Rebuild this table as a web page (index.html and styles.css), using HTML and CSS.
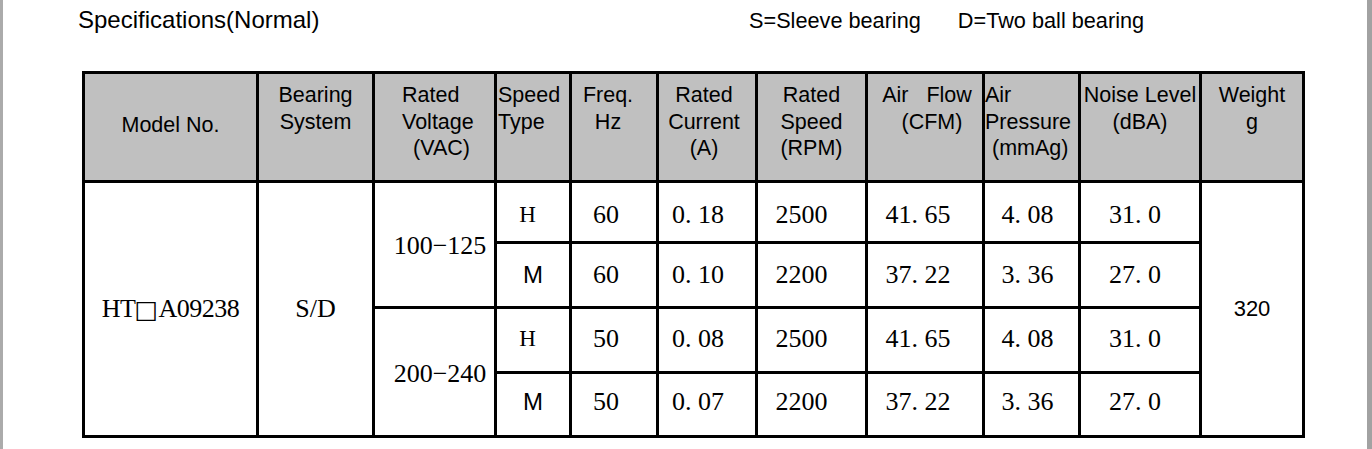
FILE: index.html
```html
<!DOCTYPE html>
<html lang="en">
<head>
<meta charset="utf-8">
<title>Specifications(Normal)</title>
<link rel="stylesheet" href="styles.css">
</head>
<body>
<div class="page">
  <div class="top-row">
    <div class="title">Specifications(Normal)</div>
    <div class="legend">
      <span>S=Sleeve bearing</span>
      <span>D=Two ball bearing</span>
    </div>
  </div>

  <div class="spec-grid">
    <div class="cell head head-mid">Model No.</div>
    <div class="cell head">Bearing<br>System</div>
    <div class="cell head head-left head-volt">Rated<br>Voltage<br><span class="volt-unit">(VAC)</span></div>
    <div class="cell head head-left head-type">Speed<br>Type</div>
    <div class="cell head head-freq">Freq.<br>Hz</div>
    <div class="cell head head-cur">Rated<br>Current<br>(A)</div>
    <div class="cell head">Rated<br>Speed<br>(RPM)</div>
    <div class="cell head head-flow"><span class="flow-top">Air Flow</span><br><span class="flow-unit">(CFM)</span></div>
    <div class="cell head head-left">Air<br>Pressure<br><span class="press-unit">(mmAg)</span></div>
    <div class="cell head">Noise Level<br>(dBA)</div>
    <div class="cell head">Weight<br>g</div>

    <div class="cell body serif span4 model">HT<span class="box">□</span>A09238</div>
    <div class="cell body serif span4">S/D</div>
    <div class="cell body serif span2 c-volt">100−125</div>
    <div class="cell body serif r1 c-h">H</div>
    <div class="cell body serif r1 c-freq">60</div>
    <div class="cell body serif r1 c-cur">0<span class="dot">.</span>18</div>
    <div class="cell body serif r1 c-rpm">2500</div>
    <div class="cell body serif r1 c-flow">41<span class="dot">.</span>65</div>
    <div class="cell body serif r1 c-press">4<span class="dot">.</span>08</div>
    <div class="cell body serif r1 c-noise">31<span class="dot">.</span>0</div>
    <div class="cell body sans-w span4">320</div>

    <div class="cell body sans-m">M</div>
    <div class="cell body serif c-freq">60</div>
    <div class="cell body serif c-cur">0<span class="dot">.</span>10</div>
    <div class="cell body serif c-rpm">2200</div>
    <div class="cell body serif c-flow">37<span class="dot">.</span>22</div>
    <div class="cell body serif c-press">3<span class="dot">.</span>36</div>
    <div class="cell body serif c-noise">27<span class="dot">.</span>0</div>

    <div class="cell body serif span2 c-volt">200−240</div>
    <div class="cell body serif r3 c-h">H</div>
    <div class="cell body serif r3 c-freq">50</div>
    <div class="cell body serif r3 c-cur">0<span class="dot">.</span>08</div>
    <div class="cell body serif r3 c-rpm">2500</div>
    <div class="cell body serif r3 c-flow">41<span class="dot">.</span>65</div>
    <div class="cell body serif r3 c-press">4<span class="dot">.</span>08</div>
    <div class="cell body serif r3 c-noise">31<span class="dot">.</span>0</div>

    <div class="cell body sans-m r4">M</div>
    <div class="cell body serif r4 c-freq">50</div>
    <div class="cell body serif r4 c-cur">0<span class="dot">.</span>07</div>
    <div class="cell body serif r4 c-rpm">2200</div>
    <div class="cell body serif r4 c-flow">37<span class="dot">.</span>22</div>
    <div class="cell body serif r4 c-press">3<span class="dot">.</span>36</div>
    <div class="cell body serif r4 c-noise">27<span class="dot">.</span>0</div>
  </div>
</div>
</body>
</html>
```
FILE: styles.css
```css
html, body {
  margin: 0;
  padding: 0;
  background: #ffffff;
}

.page {
  box-sizing: border-box;
  width: 1372px;
  height: 449px;
  border-left: 3px solid #ababab;
  border-right: 5px solid #a2a2a2;
  background: #ffffff;
  color: #000000;
  font-family: "Liberation Sans", Arial, sans-serif;
  overflow: hidden;
}

.top-row {
  display: flex;
  align-items: baseline;
  padding-top: 6px;
  padding-left: 75px;
  height: 27px;
}

.title {
  flex: 0 0 671px;
  font-size: 24px;
  line-height: 27px;
}

.legend {
  display: flex;
  gap: 37px;
  font-size: 21.7px;
  line-height: 27px;
}

.spec-grid {
  display: grid;
  grid-template-columns: 171px 113px 119px 72px 84px 96px 107px 114px 93px 118px 100px;
  grid-template-rows: 106px 58px 62px 62px 61px;
  gap: 3px;
  padding: 3px;
  background: #000000;
  width: max-content;
  margin-top: 38px;
  margin-left: 79px;
}

.cell {
  background: #ffffff;
  box-sizing: border-box;
  white-space: nowrap;
}

.head {
  background: #c0c0c0;
  font-family: "Liberation Sans", Arial, sans-serif;
  font-size: 21.5px;
  line-height: 26.5px;
  text-align: center;
  padding-top: 8px;
}

.head-mid {
  display: flex;
  align-items: center;
  justify-content: center;
  padding-top: 0;
  padding-bottom: 4px;
}

.head-left {
  text-align: left;
}

.head-volt {
  padding-left: 27px;
}

.volt-unit {
  padding-left: 11px;
}

.head-type {
  padding-left: 1px;
}

.head-freq {
  padding-right: 12px;
}

.head-cur {
  padding-right: 6px;
}

.head-flow {
  padding-left: 4px;
}

.flow-top {
  word-spacing: 12px;
}

.flow-unit {
  padding-left: 10px;
}

.press-unit {
  padding-left: 7px;
}

.body {
  display: flex;
  align-items: center;
  justify-content: center;
}

.serif {
  font-family: "Liberation Serif", "Times New Roman", "Noto Sans CJK SC", serif;
  font-size: 26px;
}

.model {
  letter-spacing: -0.5px;
}

.box {
  font-family: "DejaVu Sans", sans-serif;
  font-size: 25px;
  margin: 0 1px 0 -1px;
}

.dot {
  display: inline-block;
  width: 0.5em;
}

.sans-m {
  font-family: "Liberation Sans", Arial, sans-serif;
  font-size: 24px;
}

.sans-w {
  font-family: "Liberation Sans", Arial, sans-serif;
  font-size: 22px;
}

.span4 {
  grid-row: span 4;
}

.span2 {
  grid-row: span 2;
}

.r1 {
  padding-top: 6px;
}

.r3 {
  padding-bottom: 3px;
}

.r4 {
  padding-bottom: 5px;
}

.c-volt {
  padding-left: 11px;
  padding-top: 3px;
}

.c-h {
  font-size: 23px;
  padding-right: 11px;
}

.c-freq {
  padding-right: 16px;
}

.c-cur {
  padding-right: 18px;
}

.c-rpm {
  padding-right: 20px;
}

.c-flow {
  padding-right: 14px;
}

.c-press {
  padding-right: 8px;
}

.c-noise {
  padding-right: 10px;
}
```
